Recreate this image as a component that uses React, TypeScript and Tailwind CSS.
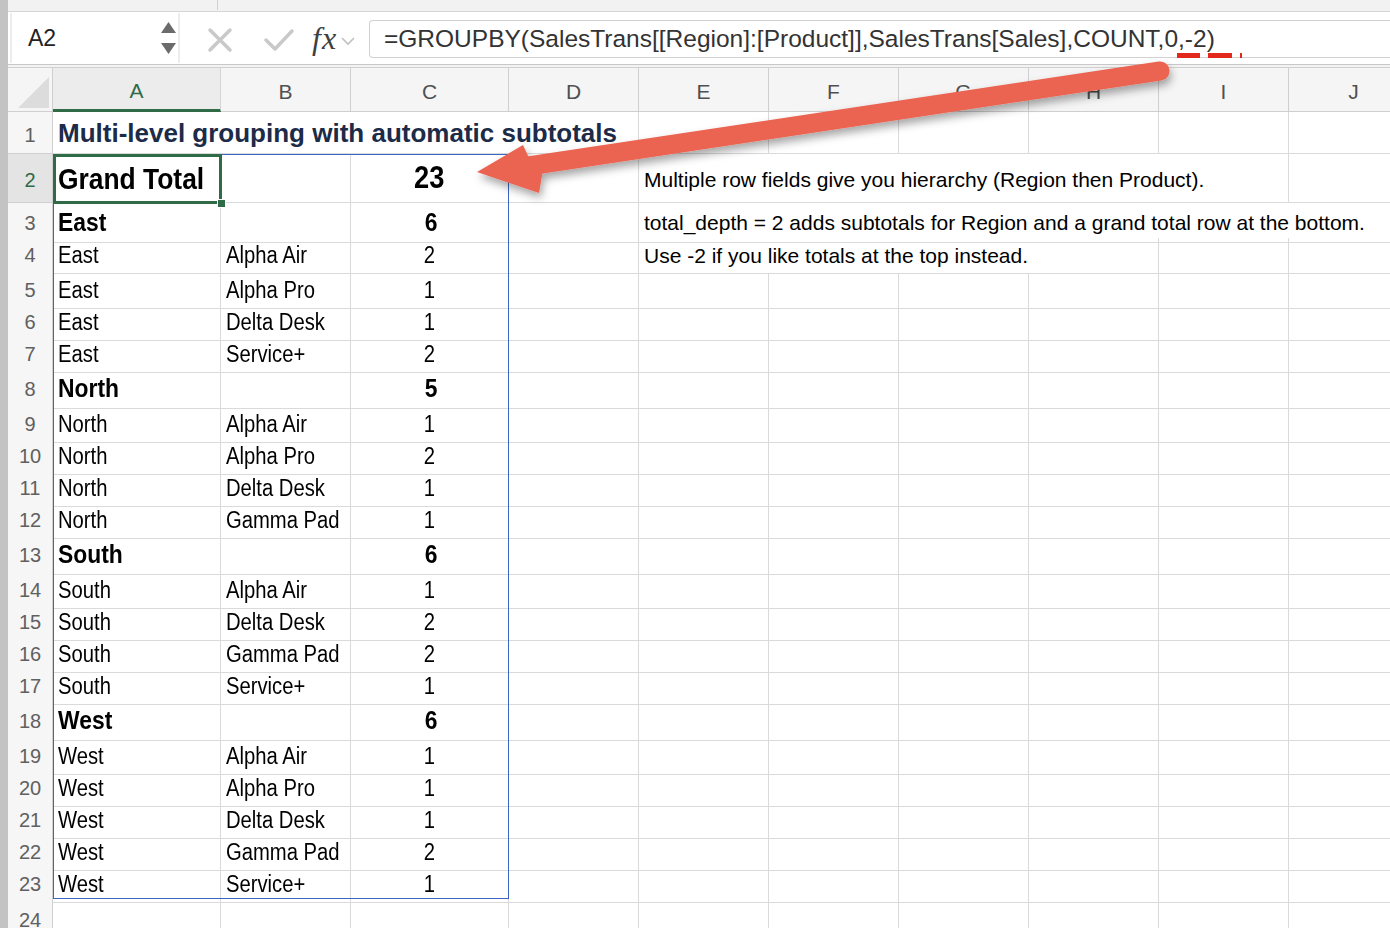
import React from "react"

// column template shared by the header row and every sheet row
const COLS =
  "grid grid-cols-[45px_168px_130px_158px_130px_130px_130px_130px_130px_130px_130px_130px]"

const UI = "font-['Liberation_Sans',Arial,sans-serif]"

type Row = {
  n: number
  h: string
  a?: string
  b?: string
  c?: string
  bold?: boolean
}

const rows: Row[] = [
  { n: 3, h: "h-[35px]", a: "East", c: "6", bold: true },
  { n: 4, h: "h-[35px]", a: "East", b: "Alpha Air", c: "2" },
  { n: 5, h: "h-[32px]", a: "East", b: "Alpha Pro", c: "1" },
  { n: 6, h: "h-[32px]", a: "East", b: "Delta Desk", c: "1" },
  { n: 7, h: "h-[32px]", a: "East", b: "Service+", c: "2" },
  { n: 8, h: "h-[38px]", a: "North", c: "5", bold: true },
  { n: 9, h: "h-[32px]", a: "North", b: "Alpha Air", c: "1" },
  { n: 10, h: "h-[32px]", a: "North", b: "Alpha Pro", c: "2" },
  { n: 11, h: "h-[32px]", a: "North", b: "Delta Desk", c: "1" },
  { n: 12, h: "h-[32px]", a: "North", b: "Gamma Pad", c: "1" },
  { n: 13, h: "h-[38px]", a: "South", c: "6", bold: true },
  { n: 14, h: "h-[32px]", a: "South", b: "Alpha Air", c: "1" },
  { n: 15, h: "h-[32px]", a: "South", b: "Delta Desk", c: "2" },
  { n: 16, h: "h-[32px]", a: "South", b: "Gamma Pad", c: "2" },
  { n: 17, h: "h-[32px]", a: "South", b: "Service+", c: "1" },
  { n: 18, h: "h-[38px]", a: "West", c: "6", bold: true },
  { n: 19, h: "h-[32px]", a: "West", b: "Alpha Air", c: "1" },
  { n: 20, h: "h-[32px]", a: "West", b: "Alpha Pro", c: "1" },
  { n: 21, h: "h-[32px]", a: "West", b: "Delta Desk", c: "1" },
  { n: 22, h: "h-[32px]", a: "West", b: "Gamma Pad", c: "2" },
  { n: 23, h: "h-[32px]", a: "West", b: "Service+", c: "1" },
]

const notes: Record<number, string> = {
  3: "total_depth  = 2 adds subtotals for Region and a grand total row at the bottom.",
  4: "Use -2 if you like totals at the top instead.",
}

const cell = "border-r border-b border-[#dadada] flex items-center whitespace-nowrap min-w-0"
const rowHead =
  "border-r border-b border-[#d0d0d0] bg-[#f6f6f6] flex items-center justify-center text-[20px] text-[#606060] " + UI
const noteCls = `pl-[5px] text-[21px] text-black ${UI}`

// Aptos Narrow look: regular face squeezed horizontally
function Narrow({ children, center, className = "" }: { children?: React.ReactNode; center?: boolean; className?: string }) {
  return (
    <span className={`inline-block scale-x-[0.88] ${center ? "origin-center" : "origin-left"} ${UI} ${className}`}>
      {children}
    </span>
  )
}

function Blank({ count }: { count: number }) {
  return (
    <>
      {Array.from({ length: count }).map((_, i) => (
        <div key={i} className={cell} />
      ))}
    </>
  )
}

function SheetRow({ r }: { r: Row }) {
  const textSize = r.bold ? "text-[26px] font-bold" : "text-[23px]"
  return (
    <div className={`${COLS} ${r.h}`}>
      <div className={rowHead}>{r.n}</div>
      <div className={`${cell} pl-[5px] text-black`}>
        <Narrow className={textSize}>{r.a}</Narrow>
      </div>
      <div className={`${cell} pl-[5px] text-black`}>
        <Narrow className={textSize}>{r.b}</Narrow>
      </div>
      <div className={`${cell} justify-center text-black`}>
        <Narrow center className={`${textSize} ${r.bold ? "pl-[3px]" : ""}`}>{r.c}</Narrow>
      </div>
      <div className={cell} />
      {r.n === 3 ? (
        <>
          <div className={`${cell} col-span-6 ${noteCls}`}>{notes[3]}</div>
          <Blank count={1} />
        </>
      ) : r.n === 4 ? (
        <>
          <div className={`${cell} col-span-4 ${noteCls}`}>{notes[4]}</div>
          <Blank count={3} />
        </>
      ) : (
        <Blank count={7} />
      )}
    </div>
  )
}

function FormulaBar() {
  return (
    <div className="flex h-[53px] shrink-0 bg-white border-b border-[#c8c8c8]">
      {/* name box */}
      <div className="w-[170px] h-[50px] ml-[2px] mt-[1px] bg-white border-x-2 border-[#ececec] flex items-center justify-between pl-[16px] pr-[2px]">
        <span className={`text-[23px] text-[#222] ${UI}`}>A2</span>
        <div className="flex flex-col gap-[10px]">
          <svg width="15" height="11" viewBox="0 0 15 11">
            <path d="M7.5 0 L15 11 L0 11 Z" fill="#6b6b6b" />
          </svg>
          <svg width="15" height="11" viewBox="0 0 15 11">
            <path d="M0 0 L15 0 L7.5 11 Z" fill="#6b6b6b" />
          </svg>
        </div>
      </div>
      {/* cancel / enter / fx */}
      <div className="flex items-center w-[189px] pl-[27px]">
        <svg width="26" height="26" viewBox="0 0 26 26" className="mt-[3px]">
          <path d="M3 3 L23 23 M23 3 L3 23" stroke="#c9c9c9" strokeWidth="3.5" strokeLinecap="round" />
        </svg>
        <svg width="32" height="26" viewBox="0 0 32 26" className="ml-[30px] mt-[3px]">
          <path d="M3 13 L12 22 L29 4" stroke="#c9c9c9" strokeWidth="3.5" fill="none" strokeLinecap="round" strokeLinejoin="round" />
        </svg>
        <span className="ml-[17px] text-[32px] italic text-[#3f3f3f] font-['Liberation_Serif',serif] leading-none tracking-[1px]">
          fx
        </span>
        <svg width="14" height="9" viewBox="0 0 14 9" className="ml-[4px] mt-[6px]">
          <path d="M1 1 L7 7 L13 1" stroke="#c0c0c0" strokeWidth="1.6" fill="none" />
        </svg>
      </div>
      {/* formula input */}
      <div className="relative flex-1 mt-[8px] h-[38px] border border-r-0 border-[#d2d2d2] rounded-l-[4px] flex items-center pl-[14px]">
        <span className={`text-[24.5px] text-[#333] whitespace-nowrap ${UI}`}>
          =GROUPBY(SalesTrans[[Region]:[Product]],SalesTrans[Sales],COUNT,0,-2)
        </span>
        {/* spell-check style squiggle */}
        <div className="absolute left-[807px] top-[32px] flex gap-[8px]">
          <div className="w-[23px] h-[5px] bg-[#e3291b]" />
          <div className="w-[24px] h-[5px] bg-[#e3291b]" />
          <div className="w-[2px] h-[5px] bg-[#e3291b]" />
        </div>
      </div>
    </div>
  )
}

function HeaderRow() {
  const letters = ["B", "C", "D", "E", "F", "G", "H", "I", "J", "K"]
  return (
    <div className={`${COLS} h-[44px] bg-[#f5f5f5] ${UI}`}>
      <div className="border-r border-b border-[#cfcfcf] relative">
        <svg width="31" height="31" viewBox="0 0 31 31" className="absolute left-[10px] top-[9px]">
          <path d="M31 0 L31 31 L0 31 Z" fill="#dcdcdc" />
        </svg>
      </div>
      <div className="border-r border-[#d4d4d4] border-b-[3px] border-b-[#2f6b46] bg-[#ececec] flex items-center justify-center pt-[4px] text-[21px] text-[#2f6b46]">
        A
      </div>
      {letters.map((l) => (
        <div
          key={l}
          className="border-r border-b border-[#cfcfcf] flex items-center justify-center pt-[4px] text-[21px] text-[#505050]"
        >
          {l}
        </div>
      ))}
    </div>
  )
}

function Arrow() {
  return (
    <svg className="absolute inset-0 pointer-events-none" width="1390" height="928" viewBox="0 0 1390 928">
      <defs>
        <filter id="sh" x="-10%" y="-50%" width="120%" height="200%">
          <feDropShadow dx="2" dy="5" stdDeviation="4" floodColor="#000" floodOpacity="0.35" />
        </filter>
      </defs>
      <g filter="url(#sh)" fill="#eb6351">
        <line x1="515" y1="168" x2="1160" y2="71" stroke="#eb6351" strokeWidth="19" strokeLinecap="round" />
        <path d="M477 172 L523 145 L530 160 L545 158 L539 193 Z" />
      </g>
    </svg>
  )
}

export default function App() {
  return (
    <div className="relative w-[1390px] h-[928px] overflow-hidden bg-white flex">
      <div className="w-[8px] shrink-0 bg-[#c3c3c3]" />
      <div className="flex-1 min-w-0 flex flex-col overflow-hidden">
        {/* window chrome strip */}
        <div className="h-[12px] shrink-0 bg-[#f2f2f2] border-b border-[#d6d6d6] relative">
          <div className="absolute left-[209px] top-0 w-px h-[10px] bg-[#d0d0d0]" />
        </div>
        <FormulaBar />
        <div className="h-[3px] shrink-0 bg-[#f3f3f3] border-b border-[#d0d0d0]" />

        <div className="relative">
          <HeaderRow />

          {/* row 1: title */}
          <div className={`${COLS} h-[42px]`}>
            <div className={`${rowHead} pt-[4px]`}>1</div>
            <div className={`${cell} col-span-4 pl-[5px] pt-[2px] text-[26px] font-bold text-[#1c2b48] ${UI}`}>
              Multi-level grouping with automatic subtotals
            </div>
            <Blank count={7} />
          </div>

          {/* row 2: grand total */}
          <div className={`${COLS} h-[49px]`}>
            <div className={`${rowHead} !bg-[#e4e4e4] !text-[#2f6b46] pt-[4px]`}>2</div>
            <div className={`${cell} pl-[5px] text-black`}>
              <Narrow className="text-[30px] font-bold scale-x-[0.9]">Grand Total</Narrow>
            </div>
            <div className={cell} />
            <div className={`${cell} justify-center text-black`}>
              <Narrow center className="text-[31px] font-bold">23</Narrow>
            </div>
            <div className={cell} />
            <div className={`${cell} col-span-5 pt-[4px] ${noteCls}`}>
              Multiple row fields give you hierarchy (Region then Product).
            </div>
            <Blank count={2} />
          </div>

          {rows.map((r) => (
            <SheetRow key={r.n} r={r} />
          ))}

          {/* row 24 */}
          <div className={`${COLS} h-[32px]`}>
            <div className={`${rowHead} pt-[6px]`}>24</div>
            <Blank count={11} />
          </div>

          {/* spill range outline */}
          <div className="absolute left-[45px] top-[86px] w-[456px] h-[745px] border-[1.5px] border-[#3d65c6] pointer-events-none" />
          {/* active cell */}
          <div className="absolute left-[45px] top-[86px] w-[169px] h-[50px] border-[3px] border-[#2f6b46] pointer-events-none" />
          <div className="absolute left-[209px] top-[131px] w-[9px] h-[9px] bg-[#2f6b46] border border-white pointer-events-none" />
        </div>
      </div>
      <Arrow />
    </div>
  )
}
